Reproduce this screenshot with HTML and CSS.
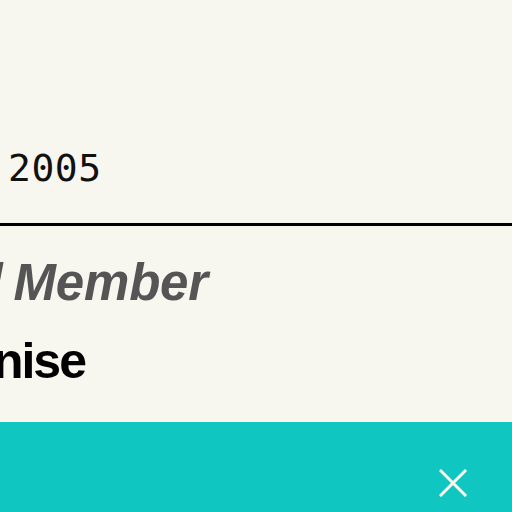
FILE: index.html
```html
<!DOCTYPE html>
<html lang="en">
<head>
<meta charset="utf-8">
<title>Council Member</title>
<link rel="stylesheet" href="styles.css">
</head>
<body>
<main class="page">
  <section class="intro">
    <div class="year">2005</div>
  </section>
  <hr class="rule">
  <section class="details">
    <h2 class="role"><span class="role-lead">Council</span> Member</h2>
    <h1 class="name"><span class="name-lead">De</span>nise</h1>
  </section>
  <footer class="bar">
    <button class="close" aria-label="Close">
      <svg width="28" height="28" viewBox="0 0 28 28" aria-hidden="true">
        <path d="M2 2 L26 26 M26 2 L2 26" stroke="#fbf8ef" stroke-width="3" fill="none" stroke-linecap="square"/>
      </svg>
    </button>
  </footer>
</main>
</body>
</html>
```
FILE: styles.css
```css
* { box-sizing: border-box; }
html, body {
  margin: 0;
  padding: 0;
  background: #f7f6ef;
}
.page {
  width: 512px;
  height: 512px;
  overflow: hidden;
  display: flex;
  flex-direction: column;
}
.intro {
  padding: 149px 0 0 8px;
  height: 223px;
}
.year {
  font-family: "DejaVu Sans Mono", monospace;
  font-size: 38px;
  line-height: 38px;
  color: #111;
  letter-spacing: 0.5px;
}
.rule {
  margin: 0;
  border: 0;
  height: 3px;
  background: #000;
  width: 100%;
}
.details {
  padding-top: 31px;
  flex: 1;
  overflow: hidden;
}
.role {
  margin: 0;
  font-family: "Liberation Sans", Arial, sans-serif;
  font-weight: 700;
  font-style: italic;
  font-size: 51px;
  line-height: 51px;
  letter-spacing: -0.2px;
  word-spacing: -3px;
  color: #555555;
  white-space: nowrap;
  margin-left: -183px;
}
.name {
  margin: 28px 0 0 -67px;
  font-family: "Liberation Sans", Arial, sans-serif;
  font-weight: 700;
  font-size: 50px;
  line-height: 50px;
  letter-spacing: -2px;
  color: #000;
  white-space: nowrap;
}
.bar {
  height: 90px;
  flex: none;
  background: #10c6c0;
  display: flex;
  justify-content: flex-end;
  align-items: flex-start;
  padding: 47px 45px 0 0;
}
.close {
  border: 0;
  background: none;
  padding: 0;
  margin: 0;
  width: 28px;
  height: 28px;
  display: block;
  cursor: pointer;
}
.close svg { display: block; }
```
